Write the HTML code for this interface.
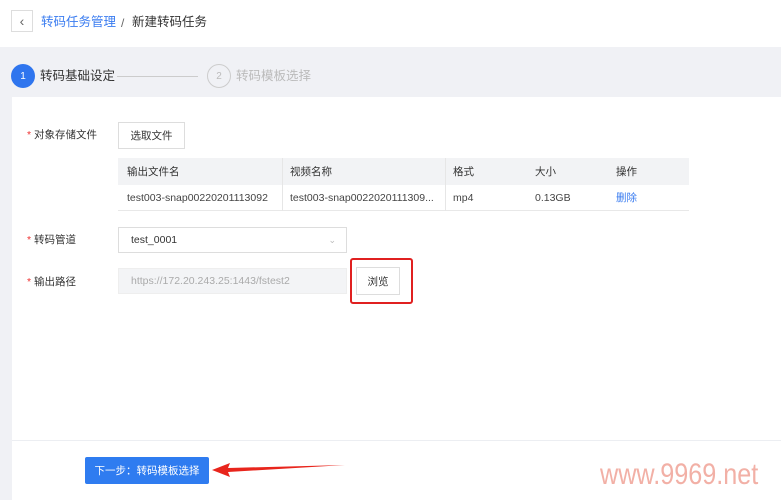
<!DOCTYPE html>
<html><head><meta charset="utf-8"><style>
*{margin:0;padding:0;box-sizing:border-box}
body{width:781px;height:500px;overflow:hidden;background:#f0f1f5;font-family:"Liberation Sans","Noto Sans CJK SC",sans-serif;font-size:11px;color:#333;position:relative}
.a{position:absolute}
.c{display:flex;align-items:center;justify-content:center}
</style></head><body>
<div class="a" style="left:0;top:0;width:781px;height:47px;background:#fff"></div>
<div class="a c" style="left:11px;top:10px;width:22px;height:22px;border:1px solid #ddd;background:#fff;color:#666;font-size:14px">&lsaquo;</div>
<div class="a" style="left:41px;top:13px;font-size:12.5px;line-height:18px;color:#3a7cf0">转码任务管理</div>
<div class="a" style="left:121px;top:13px;font-size:12px;line-height:20px;color:#666">/</div>
<div class="a" style="left:132px;top:13px;font-size:12.5px;line-height:18px;color:#333">新建转码任务</div>
<div class="a c" style="left:11px;top:64px;width:24px;height:24px;border-radius:50%;background:#2f75ee;color:#fff;font-size:10px">1</div>
<div class="a" style="left:40px;top:67px;font-size:12.5px;line-height:18px;color:#333">转码基础设定</div>
<div class="a" style="left:117px;top:76px;width:81px;height:1px;background:#ccc"></div>
<div class="a c" style="left:207px;top:64px;width:24px;height:24px;border-radius:50%;border:1px solid #ccc;color:#bbb;font-size:10px">2</div>
<div class="a" style="left:236px;top:67px;font-size:12.5px;line-height:18px;color:#bbb">转码模板选择</div>
<div class="a" style="left:12px;top:97px;width:769px;height:403px;background:#fff"></div>
<div class="a" style="left:12px;top:440px;width:769px;height:1px;background:#eceef2"></div>
<div class="a" style="left:27px;top:128px;font-size:10.5px;line-height:14px"><span style="color:#e33">*</span> 对象存储文件</div>
<div class="a c" style="left:118px;top:122px;width:67px;height:27px;border:1px solid #ddd;font-size:10.5px">选取文件</div>
<div class="a" style="left:118px;top:158px;width:571px;height:27px;background:#f2f3f5"></div>
<div class="a" style="left:118px;top:185px;width:571px;height:26px;border-bottom:1px solid #e8e8e8"></div>
<div class="a" style="left:282px;top:158px;width:1px;height:53px;background:#e6e6e6"></div>
<div class="a" style="left:445px;top:158px;width:1px;height:53px;background:#e6e6e6"></div>
<div class="a" style="left:127px;top:165px;font-size:10.5px;line-height:14px">输出文件名</div>
<div class="a" style="left:290px;top:165px;font-size:10.5px;line-height:14px">视频名称</div>
<div class="a" style="left:453px;top:165px;font-size:10.5px;line-height:14px">格式</div>
<div class="a" style="left:535px;top:165px;font-size:10.5px;line-height:14px">大小</div>
<div class="a" style="left:616px;top:165px;font-size:10.5px;line-height:14px">操作</div>
<div class="a" style="left:127px;top:191px;font-size:10.5px;line-height:14px;color:#444">test003-snap00220201113092</div>
<div class="a" style="left:290px;top:191px;font-size:10.5px;line-height:14px;color:#444">test003-snap0022020111309...</div>
<div class="a" style="left:453px;top:191px;font-size:10.5px;line-height:14px;color:#444">mp4</div>
<div class="a" style="left:535px;top:191px;font-size:10.5px;line-height:14px;color:#444">0.13GB</div>
<div class="a" style="left:616px;top:191px;font-size:10.5px;line-height:14px;color:#3a7cf0">删除</div>
<div class="a" style="left:27px;top:233px;font-size:10.5px;line-height:14px"><span style="color:#e33">*</span> 转码管道</div>
<div class="a" style="left:118px;top:227px;width:229px;height:26px;border:1px solid #ddd;padding-left:12px;line-height:24px;font-size:10.5px">test_0001<span style="position:absolute;right:10px;top:0;color:#bbb;font-size:9px">&#8964;</span></div>
<div class="a" style="left:27px;top:275px;font-size:10.5px;line-height:14px"><span style="color:#e33">*</span> 输出路径</div>
<div class="a" style="left:118px;top:268px;width:229px;height:26px;background:#f3f4f6;border:1px solid #eee;padding-left:12px;line-height:24px;font-size:10.5px;color:#aaa">https://172.20.243.25:1443/fstest2</div>
<div class="a" style="left:350px;top:258px;width:63px;height:46px;border:2px solid #e02020;border-radius:3px"></div>
<div class="a c" style="left:356px;top:267px;width:44px;height:28px;border:1px solid #ddd;font-size:10.5px">浏览</div>
<div class="a c" style="left:85px;top:457px;width:124px;height:27px;background:#2f7cf0;border-radius:2px;color:#fff;font-size:10.5px">下一步：转码模板选择</div>
<svg class="a" style="left:210px;top:460px" width="140" height="20"><path d="M2 10 L20 3 L18 8 L135 5 L18 12 L20 17 Z" fill="#e8251c"/></svg>
<div class="a" style="left:600px;top:458px;font-size:30px;line-height:33px;color:#f2b0a6;font-family:'Liberation Sans',sans-serif;transform:scaleX(0.84);transform-origin:0 0;white-space:nowrap">www.9969.net</div>
</body></html>
